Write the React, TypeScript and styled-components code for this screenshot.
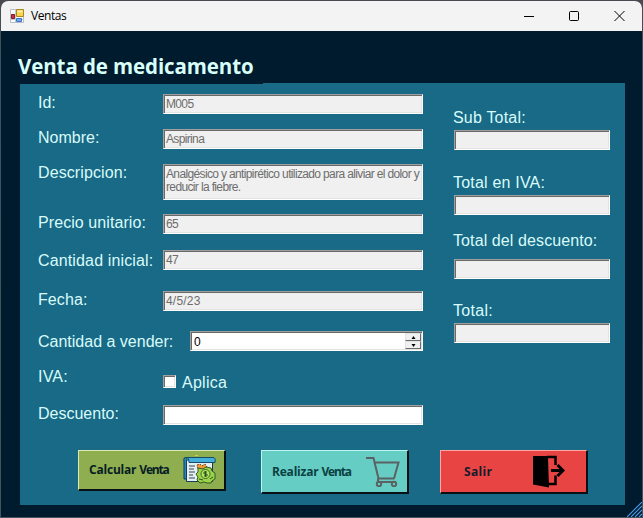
import React from 'react';
import styled, { createGlobalStyle } from 'styled-components';

const GlobalStyle = createGlobalStyle`
  * { box-sizing: border-box; }
  body { margin: 0; background: #46484e; overflow: hidden; }
`;

const Desktop = styled.div`
  width: 643px;
  height: 518px;
  padding: 1px;
  background: linear-gradient(#4b4a50 0, #4b4a50 2px, #3c5260 60px, #43545e 100%);
  font-family: 'Liberation Sans', Arial, sans-serif;
`;

const Window = styled.div`
  height: 516px;
  display: flex;
  flex-direction: column;
  background: #001b2e;
  border-radius: 7px 7px 0 0;
  overflow: hidden;
`;

const TitleBar = styled.header`
  flex: none;
  height: 30px;
  display: flex;
  align-items: center;
  padding: 0 17px 0 9px;
  background: #f3f3f3;
`;

const WindowName = styled.span`
  margin-left: 7px;
  flex: 1;
  font: 12px/16px 'Open Sans', sans-serif;
  letter-spacing: -0.45px;
  color: #000;
`;

const Controls = styled.div`
  display: flex;
  align-items: center;
  gap: 35px;
`;

const Heading = styled.h1`
  flex: none;
  height: 53px;
  margin: 0;
  padding: 20px 0 0 17px;
  font: bold 20.5px/30px 'Open Sans', sans-serif;
  letter-spacing: -0.1px;
  color: #d9fffb;
  white-space: nowrap;
`;

const Panel = styled.main`
  width: 605px;
  height: 421px;
  margin-left: 19px;
  background: #186a86;
  display: grid;
  grid-template-columns: 403px 1fr;
  grid-template-rows: 366px 1fr;
`;

const PanelEdge = styled.div`
  flex: none;
  height: 1px;
  margin: -1px 17px 0 262px;
  background: #186a86;
`;

const Form = styled.div`
  padding: 10px 0 0 18px;
  display: grid;
  align-content: start;
  grid-template-rows: 35px 35px 50px 36px 41px 40px 39px 35px 20px;
`;

const FormRow = styled.div<{ $labelWidth?: number }>`
  display: grid;
  grid-template-columns: ${p => p.$labelWidth ?? 125}px 1fr;
  align-items: start;
`;

const Label = styled.label<{ $shift?: number; $spacing?: number }>`
  margin-top: ${p => p.$shift ?? 0}px;
  font-size: 16px;
  line-height: 18px;
  height: 18px;
  letter-spacing: ${p => p.$spacing ?? 0}px;
  color: #d9fbfa;
  white-space: nowrap;
`;

const Field = styled.div<{ $enabled?: boolean; $tall?: boolean; $spacing?: number }>`
  height: ${p => (p.$tall ? 36 : 20)}px;
  padding: ${p => (p.$tall ? 3 : 1)}px 0 0 2px;
  border: 1px solid;
  border-color: #a0a0a0 #fff #fff #a0a0a0;
  box-shadow: inset 1px 1px #696969, inset -1px -1px #e3e3e3;
  background: ${p => (p.$enabled ? '#fff' : '#f0f0f0')};
  color: ${p => (p.$enabled ? '#000' : '#6d6d6d')};
  font-size: 12px;
  line-height: ${p => (p.$tall ? 13 : 16)}px;
  letter-spacing: ${p => p.$spacing ?? -0.65}px;
  white-space: pre;
`;

const NumberField = styled(Field)`
  display: flex;
  justify-content: space-between;
  padding: 1px 1px 1px 3px;
  line-height: 18px;
`;

const Spinner = styled.div`
  width: 16px;
  display: grid;
  grid-template-rows: 8px 8px;
`;

const SpinButton = styled.button`
  padding: 0;
  border: 1px solid;
  border-color: #e3e3e3 #696969 #696969 #e3e3e3;
  background: #f0f0f0;
  display: grid;
  place-items: center;
`;

const CheckRow = styled.div`
  display: flex;
  align-items: flex-start;
  gap: 6px;
  margin-top: 4px;
`;

const CheckBox = styled.span`
  width: 13px;
  height: 13px;
  margin-top: 1px;
  border: 1px solid;
  border-color: #a0a0a0 #fff #fff #a0a0a0;
  box-shadow: inset 1px 1px #696969, inset -1px -1px #e3e3e3;
  background: #fff;
`;

const Totals = styled.div`
  padding: 25px 15px 0 30px;
  display: grid;
  align-content: start;
  grid-template-rows: 65px 64px 64px 42px;
`;

const Total = styled.div<{ $gap?: number; $lift?: number }>`
  display: flex;
  flex-direction: column;
  gap: ${p => p.$gap ?? 3}px;
  margin-top: ${p => p.$lift ?? 0}px;
  & > ${Field} { margin-left: 1px; }
`;

const Actions = styled.div`
  grid-column: 1 / -1;
  display: flex;
  align-items: flex-start;
  padding-left: 58px;
`;

const ActionButton = styled.button<{ $bg: string; $light: string; $color: string; $height: number; $gap: number; $pad: number }>`
  width: 148px;
  height: ${p => p.$height}px;
  margin: 0 ${p => p.$gap}px 0 0;
  padding: 0 0 0 ${p => p.$pad}px;
  display: flex;
  align-items: center;
  border: solid;
  border-width: 1px 2px 2px 1px;
  border-color: ${p => p.$light} #081015 #081015 ${p => p.$light};
  background: ${p => p.$bg};
  color: ${p => p.$color};
  font: bold 12px/16px 'Open Sans', sans-serif;
  text-align: left;
  white-space: nowrap;
`;

const Caption = styled.span<{ $width: number; $shift?: number; $spacing?: number }>`
  width: ${p => p.$width}px;
  flex: none;
  margin-top: ${p => p.$shift ?? 0}px;
  letter-spacing: ${p => p.$spacing ?? -0.2}px;
`;

const Tight = styled.span`
  letter-spacing: -1.2px;
`;

const Grip = styled.svg`
  position: absolute;
  left: 627px;
  top: 502px;
`;

const AppIcon = () => (
  <svg width="14" height="14" viewBox="0 0 14 14">
    <path d="M.5.5h13v13H.5z" fill="#fafafa" stroke="#b9bfc8" />
    <path d="M.5 5.5h5M5.5.5v13M.5 10.500h13" stroke="#c4cad2" fill="none" />
    <path d="M6.500.5h7v7h-7z" fill="#fbd34a" stroke="#a98724" />
    <path d="M7.500 1.500h5v2h-5z" fill="#fff0a5" />
    <path d="M1.500 5.500h3v4h-3z" fill="#c8323a" stroke="#8b1822" />
    <path d="M6.500 9.500h5v3h-5z" fill="#74a9ee" stroke="#3976c8" />
  </svg>
);

const ReceiptIcon = () => (
  <svg width="33" height="30" viewBox="0 0 33 30">
    <path d="M4 3Q0 1 1 7v17h4" fill="#208ac2" stroke="#123c54" />
    <path d="M3.500 5h26v21.500h-26z" fill="#e4eef5" stroke="#173c53" />
    <path d="M3 2.500h27q3 0 2 5H6q0-5-3-5z" fill="#43aeda" stroke="#174c68" />
    <path d="M6 11h6M6 14h5M6 17h6M6 20h4M6 23h6" stroke="#38434f" strokeWidth="1.200" />
    <path d="M14 10l3-1 2 2 3-2 2 3-3 3-6-1z" fill="#f39a36" stroke="#754820" strokeDasharray="2 1" />
    <path d="M15 13l5 1 3-2 5 1 1 3 3 2v6l-3 2-1 2h-4l-3-1-4 1-3-3 1-3-2-3 2-2z" fill="#9bd24a" stroke="#325b20" />
    <circle cx="22.500" cy="19" r="4.500" fill="#b8e45e" stroke="#386c29" />
    <path d="M24 17h-3v2h3v2h-3M22.500 16v6M16 24l4 1M27 24l3-2" stroke="#265225" fill="none" />
    <path d="M12 0h3v1h-3z" fill="#d5ce43" />
  </svg>
);

const CartIcon = () => (
  <svg width="34" height="31" viewBox="0 0 34 31" fill="none" stroke="#5b6263" strokeWidth="2">
    <path d="M0 2h7.500l5 20.500h16M9 6.500h23.500l-4.500 16M12 22.500v3.500h18" />
    <circle cx="13" cy="28" r="2.200" />
    <circle cx="28" cy="28" r="2.200" />
  </svg>
);

const ExitIcon = () => (
  <svg width="33" height="33" viewBox="0 0 33 33">
    <path d="M1 1h15v2l1 29.500-16-3z" fill="#000" />
    <path d="M15 2h8.500v8M23.500 20.500V29H16" fill="none" stroke="#000" strokeWidth="2.500" />
    <path d="M19 15.500h11M25.500 10l5.500 5.500-5.500 5.500" fill="none" stroke="#000" strokeWidth="3" />
  </svg>
);

const Arrow = ({ down = false }: { down?: boolean }) => (
  <svg width="5" height="3" viewBox="0 0 5 3">
    <path d={down ? 'M0.500 0h4L2.500 3z' : 'M0.500 3h4L2.500 0z'} fill="#000" />
  </svg>
);

export default function App() {
  return (
    <Desktop>
      <GlobalStyle />
      <Window>
        <TitleBar>
          <AppIcon />
          <WindowName>Ventas</WindowName>
          <Controls>
            <svg width="10" height="10"><path d="M0 5.500h10" stroke="#000" /></svg>
            <svg width="10" height="10"><rect x=".5" y=".5" width="9" height="9" rx="1" fill="none" stroke="#000" /></svg>
            <svg width="11" height="10"><path d="M.5 0l10 10M10.500 0l-10 10" stroke="#000" /></svg>
          </Controls>
        </TitleBar>
        <Heading>Venta de medicamento</Heading>
        <PanelEdge />
        <Panel>
          <Form>
            <FormRow><Label>Id:</Label><Field>M005</Field></FormRow>
            <FormRow><Label>Nombre:</Label><Field>Aspirina</Field></FormRow>
            <FormRow>
              <Label $spacing={0.1}>Descripcion:</Label>
              <Field $tall $spacing={-0.64}>{'Analgésico y antipirético utilizado para aliviar el dolor y\nreducir la fiebre.'}</Field>
            </FormRow>
            <FormRow><Label $spacing={0.08}>Precio unitario:</Label><Field>65</Field></FormRow>
            <FormRow><Label $shift={2} $spacing={0.14}>Cantidad inicial:</Label><Field>47</Field></FormRow>
            <FormRow><Label $spacing={0.1}>Fecha:</Label><Field $spacing={0.2}>4/5/23</Field></FormRow>
            <FormRow $labelWidth={152}>
              <Label $shift={2}>Cantidad a vender:</Label>
              <NumberField $enabled>
                0
                <Spinner>
                  <SpinButton><Arrow /></SpinButton>
                  <SpinButton><Arrow down /></SpinButton>
                </Spinner>
              </NumberField>
            </FormRow>
            <FormRow>
              <Label $shift={-2} $spacing={0.2}>IVA:</Label>
              <CheckRow><CheckBox /><Label $spacing={0.25}>Aplica</Label></CheckRow>
            </FormRow>
            <FormRow><Label>Descuento:</Label><Field $enabled /></FormRow>
          </Form>
          <Totals>
            <Total><Label $spacing={0.2}>Sub Total:</Label><Field /></Total>
            <Total><Label $spacing={0.2}>Total en IVA:</Label><Field /></Total>
            <Total $gap={9} $lift={-6}><Label $spacing={0.1}>Total del descuento:</Label><Field /></Total>
            <Total><Label $spacing={0.3}>Total:</Label><Field /></Total>
          </Totals>
          <Actions>
            <ActionButton $bg="#8fae50" $light="#dce9b5" $color="#071d25" $height={41} $gap={35} $pad={10}>
              <Caption $width={94}>Calcular <Tight>Venta</Tight></Caption>
              <ReceiptIcon />
            </ActionButton>
            <ActionButton $bg="#66cdc4" $light="#bdf5ef" $color="#0b4142" $height={44} $gap={31} $pad={10}>
              <Caption $width={94} $shift={1}>Realizar <Tight>Venta</Tight></Caption>
              <CartIcon />
            </ActionButton>
            <ActionButton $bg="#e84444" $light="#ffa5a5" $color="#141c2b" $height={44} $gap={0} $pad={23}>
              <Caption $width={68} $spacing={0.3}>Salir</Caption>
              <ExitIcon />
            </ActionButton>
          </Actions>
        </Panel>
      </Window>
      <Grip width="15" height="15" stroke="#4a9cec" strokeWidth="1.1">
        <path d="M0 15L15 0M4 15L15 4M8 15L15 8M12 15L15 12" />
      </Grip>
    </Desktop>
  );
}
